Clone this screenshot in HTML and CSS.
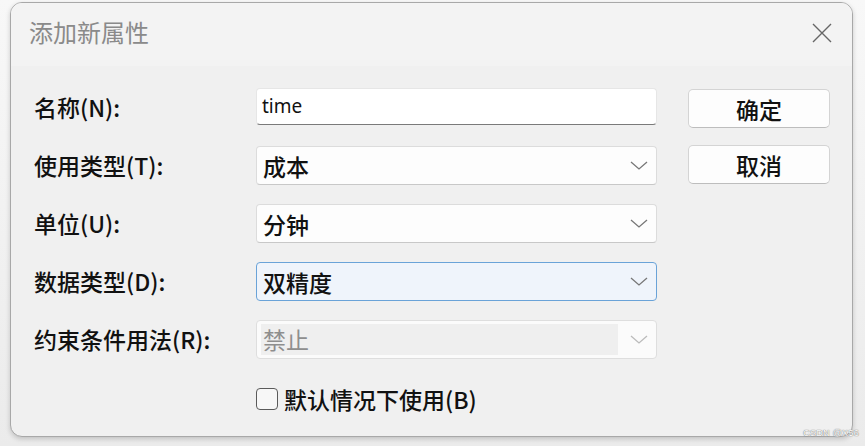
FILE: index.html
```html
<!DOCTYPE html>
<html lang="zh">
<head>
<meta charset="utf-8">
<title>添加新属性</title>
<link rel="stylesheet" href="styles.css">
</head>
<body>
<div class="dialog">
  <div class="titlebar">
    <span class="title">添加新属性</span>
    <svg class="close" width="22" height="22" viewBox="0 0 22 22"><path d="M2 2 L20 20 M20 2 L2 20" stroke="#666" stroke-width="1.4" fill="none"/></svg>
  </div>
  <div class="content">
    <div class="form">
      <label class="label">名称(N):</label>
      <div class="field input">time</div>

      <label class="label">使用类型(T):</label>
      <div class="field select"><span>成本</span><svg class="chev" width="18" height="10" viewBox="0 0 18 10"><path d="M1 1 L9 8 L17 1" stroke="#777" stroke-width="1.3" fill="none"/></svg></div>

      <label class="label">单位(U):</label>
      <div class="field select"><span>分钟</span><svg class="chev" width="18" height="10" viewBox="0 0 18 10"><path d="M1 1 L9 8 L17 1" stroke="#777" stroke-width="1.3" fill="none"/></svg></div>

      <label class="label">数据类型(D):</label>
      <div class="field select focus"><span>双精度</span><svg class="chev" width="18" height="10" viewBox="0 0 18 10"><path d="M1 1 L9 8 L17 1" stroke="#777" stroke-width="1.3" fill="none"/></svg></div>

      <label class="label">约束条件用法(R):</label>
      <div class="field select disabled"><span class="dis-text">禁止</span><svg class="chev" width="18" height="10" viewBox="0 0 18 10"><path d="M1 1 L9 8 L17 1" stroke="#bbb" stroke-width="1.3" fill="none"/></svg></div>

      <div class="check-row">
        <span class="box"></span>
        <span class="check-label">默认情况下使用(B)</span>
      </div>
    </div>
    <div class="buttons">
      <div class="btn">确定</div>
      <div class="btn">取消</div>
    </div>
  </div>
</div>
<div class="watermark">CSDN @X56</div>
</body>
</html>
```

FILE: styles.css
```css
* { box-sizing: border-box; }
html, body {
  margin: 0;
  padding: 0;
  width: 865px;
  height: 446px;
  overflow: hidden;
  background: linear-gradient(#f8f8f8, #ebebeb);
  font-family: "Noto Sans CJK SC", "Noto Sans", sans-serif;
  color: #1a1a1a;
}
body { position: relative; padding: 2px 12px 0 10px; }
.dialog {
  width: 843px;
  height: 435px;
  border: 1px solid #a8a8a8;
  border-radius: 12px;
  background: #f0f0f0;
  overflow: hidden;
  box-shadow: 0 2px 5px rgba(0,0,0,0.18);
}
.titlebar {
  height: 63px;
  background: #f3f3f3;
  display: flex;
  align-items: center;
  justify-content: space-between;
  padding: 0 19px 0 18px;
}
.title {
  font-size: 24px;
  color: #8a8a8a;
  margin-top: -6px;
}
.close { margin-top: -4px; }
.content {
  display: flex;
  padding: 22px 22px 0 23px;
}
.form {
  display: grid;
  grid-template-columns: 222px 401px;
  grid-auto-rows: 39px;
  row-gap: 19px;
  align-items: center;
}
.label {
  font-size: 23px;
  line-height: 39px;
  color: #111;
  font-weight: 500;
}
.field {
  height: 39px;
  display: flex;
  align-items: center;
  padding: 0 8px 0 6px;
  font-size: 23px;
  font-weight: 500;
  color: #111;
  border-radius: 4px;
}
.input {
  height: 37px;
  align-self: start;
  background: #ffffff;
  border: 1px solid #e6e6e6;
  border-bottom: 1.5px solid #7a7a7a;
  font-family: "Noto Sans", "Liberation Sans", sans-serif;
  font-size: 19px;
  font-weight: 400;
  padding-left: 5px;
  padding-bottom: 1px;
}
.select {
  background: #fdfdfd;
  border: 1px solid #dcdcdc;
  border-bottom-color: #c8c8c8;
  justify-content: space-between;
}
.focus {
  background: #eff4fb;
  border: 1.5px solid #6aa3d8;
}
.disabled {
  background: #fbfbfb;
  border: 1px solid #dedede;
  padding: 3px 8px 3px 4px;
}
.dis-text {
  flex: 0 0 357px;
  height: 31px;
  line-height: 31px;
  background: #efefef;
  color: #8e8e8e;
  font-weight: 400;
  padding-left: 2px;
}
.check-row {
  grid-column: 2;
  display: flex;
  align-items: center;
  gap: 6px;
  margin-top: 2px;
}
.box {
  width: 22px;
  height: 22px;
  border: 1.5px solid #5a5a5a;
  border-radius: 4px;
  background: #f7f7f7;
}
.check-label { font-size: 23px; font-weight: 500; color: #111; }
.buttons {
  margin-left: 31px;
  display: flex;
  flex-direction: column;
  gap: 17px;
  padding-top: 1px;
}
.btn {
  width: 142px;
  height: 39px;
  background: #fdfdfd;
  border: 1px solid #d4d4d4;
  border-bottom-color: #bdbdbd;
  border-radius: 5px;
  display: flex;
  align-items: center;
  justify-content: center;
  font-size: 23px;
  font-weight: 500;
  color: #111;
}
.watermark {
  position: absolute;
  right: 6px;
  bottom: 8px;
  font-family: "Liberation Sans", sans-serif;
  font-size: 9px;
  color: #ffffff;
  text-shadow: 0 0 1px #777, 0 0 1px #777;
  letter-spacing: 0.3px;
}
```
